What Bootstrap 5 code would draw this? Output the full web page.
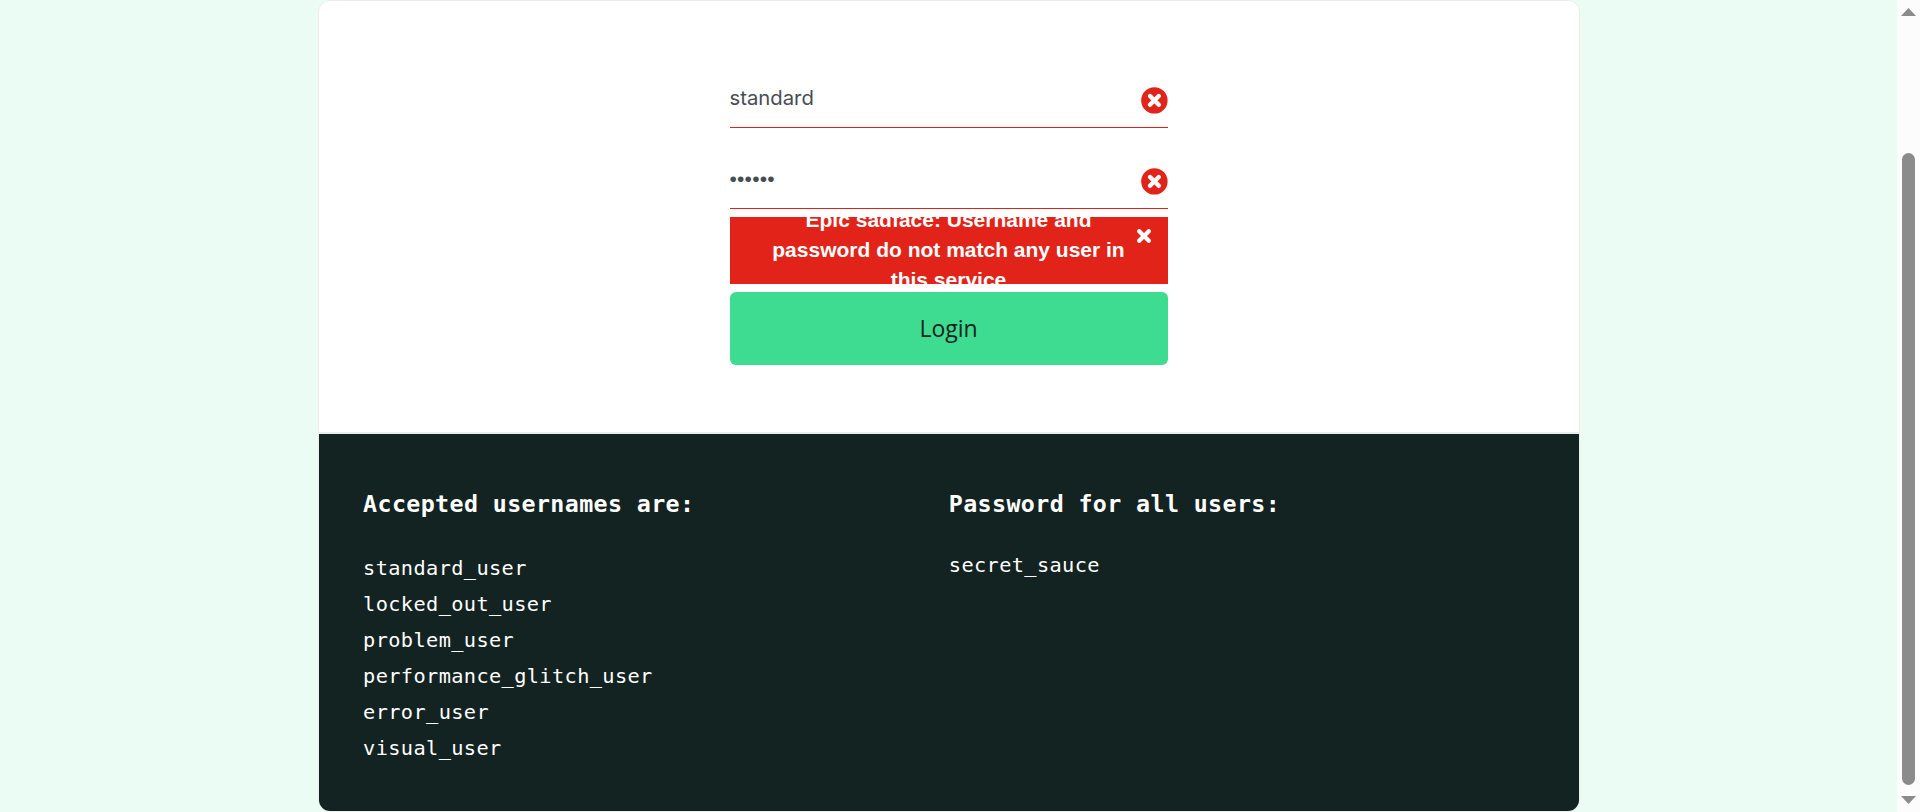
<!DOCTYPE html>
<html lang="en">
<head>
<meta charset="utf-8">
<meta name="viewport" content="width=device-width, initial-scale=1">
<title>Swag Labs</title>
<link href="https://cdn.jsdelivr.net/npm/bootstrap@5.3.0/dist/css/bootstrap.min.css" rel="stylesheet">
<style>
  body { background: #ebfcf5; font-family: "Open Sans", "Liberation Sans", sans-serif; height: 812px; }
  .login-panel { width: 1262px; height: 812px; border: 1px solid #ededed; border-radius: 12px; background: #fff; }
  .login-area { height: 433px; padding-top: 62px; border-bottom: 2px solid #e8eeeb; }
  .login-form { width: 438px; }
  .field { height: 65px; border-bottom: 1px solid #e2231a; margin-bottom: 16px; }
  .field .form-control { font-size: 21px; line-height: 30px; height: 30px; color: #484c55; background: transparent; margin-top: 20px; }
  .field .user-input { font-family: Inter, "Open Sans", sans-serif; font-size: 20.3px; font-weight: 400; }
  .field .pass-input { font-family: "Liberation Sans", sans-serif; letter-spacing: .2px; }
  .field svg { margin-top: 24px; }
  .error-box { height: 67px; margin-top: -8px; padding: 0 35px; background: #e2231a; color: #fff; }
  .error-box h3 { font: bold 21px/30px "Liberation Sans", Arial, sans-serif; padding-bottom: 2px; }
  .error-close { top: 12px; right: 17px; line-height: 0; }
  .login-btn { height: 73px; margin-top: 8px; border-radius: 6px; background: #3ddc91; color: #132322; font-size: 23px; font-weight: 400; }
  .login-btn:hover { background: #3ddc91; color: #132322; }
  .credentials { background: #132322; color: #fff; font: 20.3px/36px "DejaVu Sans Mono", monospace; letter-spacing: .38px; padding: 49px 44px 0 44.6px; border-radius: 0 0 11px 11px; }
  .credentials h4 { font: bold 23.3px/42px "DejaVu Sans Mono", monospace; margin-bottom: 25px; }
  .credentials .pass-col h4 { margin-bottom: 22px; }
  .page-scroll { width: 23px; background: #fcfcfc; padding: 8px 0; }
  .scroll-thumb { width: 13px; height: 632px; margin-top: 137px; background: #8b8b8b; }
</style>
</head>
<body class="d-flex overflow-hidden">
<main class="flex-grow-1 d-flex justify-content-center">
  <div class="login-panel d-flex flex-column">
    <section class="login-area d-flex justify-content-center flex-shrink-0">
      <form class="login-form">
        <div class="field d-flex">
          <input class="form-control border-0 rounded-0 shadow-none p-0 user-input" type="text" value="standard" aria-label="Username">
          <svg class="flex-shrink-0" width="27" height="27" viewBox="0 0 27 27"><circle cx="13.4" cy="13.4" r="13.2" fill="#e2231a"/><path d="M9 9l8.8 8.8M17.8 9L9 17.8" stroke="#fff" stroke-width="4.4" stroke-linecap="round"/></svg>
        </div>
        <div class="field d-flex">
          <input class="form-control border-0 rounded-0 shadow-none p-0 pass-input" type="password" value="secret" aria-label="Password">
          <svg class="flex-shrink-0" width="27" height="27" viewBox="0 0 27 27"><circle cx="13.4" cy="13.4" r="13.2" fill="#e2231a"/><path d="M9 9l8.8 8.8M17.8 9L9 17.8" stroke="#fff" stroke-width="4.4" stroke-linecap="round"/></svg>
        </div>
        <div class="error-box position-relative overflow-hidden d-flex align-items-center justify-content-center">
          <h3 class="m-0 text-center flex-shrink-0">Epic sadface: Username and<br>password do not match any user in<br>this service</h3>
          <button type="button" class="error-close position-absolute border-0 bg-transparent p-0" aria-label="Close">
            <svg width="14" height="14" viewBox="0 0 14 14"><path d="M2.2 2.2l9.6 9.6M11.8 2.2l-9.6 9.6" stroke="#fff" stroke-width="4.2" stroke-linecap="round"/></svg>
          </button>
        </div>
        <button type="button" class="login-btn btn w-100 border-0 p-0">Login</button>
      </form>
    </section>
    <section class="credentials flex-grow-1">
      <div class="row g-0">
        <div class="col-6">
          <h4>Accepted usernames are:</h4>
          <div>standard_user</div>
          <div>locked_out_user</div>
          <div>problem_user</div>
          <div>performance_glitch_user</div>
          <div>error_user</div>
          <div>visual_user</div>
        </div>
        <div class="col-6 pass-col">
          <h4>Password for all users:</h4>
          <div>secret_sauce</div>
        </div>
      </div>
    </section>
  </div>
</main>
<aside class="page-scroll flex-shrink-0 d-flex flex-column align-items-center" aria-hidden="true">
  <svg width="15" height="8" viewBox="0 0 15 8"><path d="M0 8L7.5 0L15 8z" fill="#8b8b8b"/></svg>
  <div class="scroll-thumb rounded-pill flex-shrink-0"></div>
  <svg class="mt-auto" width="15" height="8" viewBox="0 0 15 8"><path d="M0 0L7.5 8L15 0z" fill="#8b8b8b"/></svg>
</aside>
<script src="https://cdn.jsdelivr.net/npm/bootstrap@5.3.0/dist/js/bootstrap.bundle.min.js"></script>
</body>
</html>
